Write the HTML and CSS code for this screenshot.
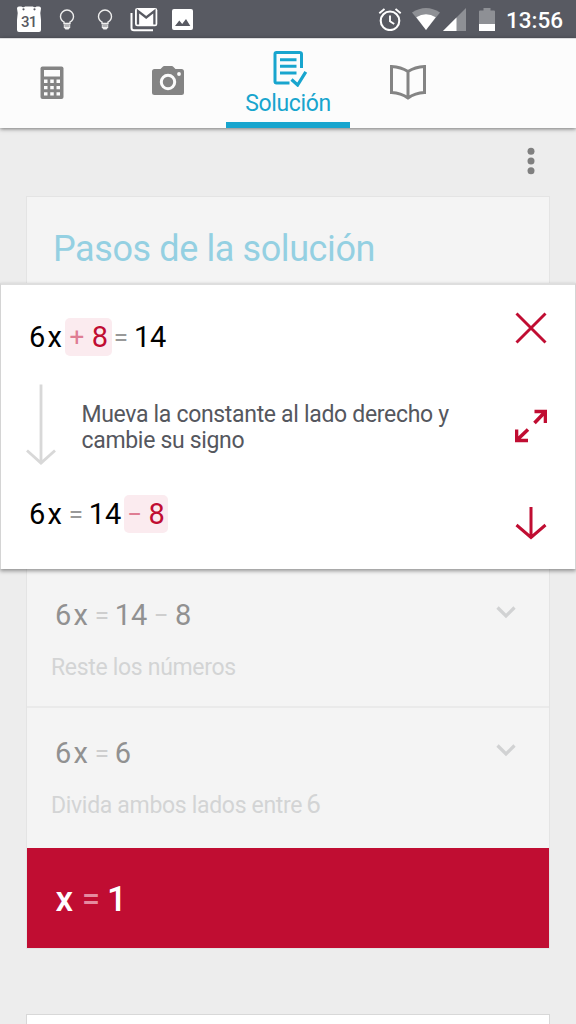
FILE: index.html
```html
<!DOCTYPE html>
<html lang="es">
<head>
    <meta charset="UTF-8">
    <title>Solución</title>
    <meta name="viewport" content="width=device-width, initial-scale=1.0">
    <link rel="stylesheet" href="styles.css">
</head>
<body>

<header class="status-bar">
    <div class="status-left">
        <svg class="calendar" width="26" height="27" viewBox="0 0 26 27">
            <path d="M1 2.500Q1 .5 3 .5H5.500A1.800 1 0 0 0 9 .5H17A1.800 1 0 0 0 20.500 .5H23Q25 .5 25 2.500L24.300 7L25 14V24Q25 26 23 26H3Q1 26 1 24V14L1.700 7Z" fill="#fff"/>
            <circle cx="7.500" cy="3.300" r="1.100" fill="#585a62"/>
            <circle cx="18.500" cy="3.300" r="1.100" fill="#585a62"/>
            <text x="12.700" y="20.800" text-anchor="middle" class="calendar-day">31</text>
        </svg>
        <svg class="bulb" width="16" height="22" viewBox="0 0 16 22">
            <path d="M5 14.500V13Q1.500 11 1.500 7.500A6.300 6.300 0 0 1 14.500 7.500Q14.500 11 11 13V14.500Z" fill="none" stroke="#eee" stroke-width="1.400"/>
            <path d="M4.800 15.500H11.200V18.500L9.500 20.500H6.500L4.800 18.500Z" fill="#eee"/>
            <path d="M5.500 17H10.500" stroke="#585a62" stroke-width=".8"/>
        </svg>
        <svg class="bulb" width="16" height="22" viewBox="0 0 16 22">
            <path d="M5 14.500V13Q1.500 11 1.500 7.500A6.300 6.300 0 0 1 14.500 7.500Q14.500 11 11 13V14.500Z" fill="none" stroke="#eee" stroke-width="1.400"/>
            <path d="M4.800 15.500H11.200V18.500L9.500 20.500H6.500L4.800 18.500Z" fill="#eee"/>
            <path d="M5.500 17H10.500" stroke="#585a62" stroke-width=".8"/>
        </svg>
        <svg class="mail" width="28" height="24" viewBox="0 0 28 24">
            <path d="M1.500 5V20Q1.500 22.300 4 22.300H23" fill="none" stroke="#fff" stroke-width="2"/>
            <path d="M7.500 0H25Q27.300 0 27.300 2.300V16Q27.300 18.300 25 18.300H7.500Q5 18.300 5 16V2.300Q5 0 7.500 0Z" fill="#fff"/>
            <path d="M8 16.500V3.200L16.200 9.500L24.400 3.200V16.500" fill="none" stroke="#585a62" stroke-width="2.300"/>
        </svg>
        <svg class="image" width="21" height="21" viewBox="0 0 21 21">
            <rect width="21" height="21" rx="2" fill="#fff"/>
            <path d="M3 17L7.300 11.500L10.200 15L14 10L18.300 17Z" fill="#585a62"/>
        </svg>
    </div>
    <div class="status-right">
        <svg class="alarm" width="24" height="24" viewBox="0 0 24 24">
            <circle cx="12" cy="13.800" r="9.300" fill="none" stroke="#fff" stroke-width="2.100"/>
            <path d="M12 8.500V14.300L16.200 17M1.300 6.300L6.500 2M22.700 6.300L17.500 2" fill="none" stroke="#fff" stroke-width="1.900"/>
        </svg>
        <svg class="wifi" width="28" height="22" viewBox="0 0 28 22">
            <path d="M0 4.500Q14-4.500 28 4.500L14 22Z" fill="#8e9095"/>
            <path d="M4.300 9.300Q14 3 23.700 9.300L14 22Z" fill="#fff"/>
        </svg>
        <svg class="signal" width="23" height="23" viewBox="0 0 23 23">
            <path d="M0 23L23 0V23Z" fill="#8e9095"/>
            <path d="M0 23L13.500 9.500V23Z" fill="#fff"/>
        </svg>
        <svg class="battery" width="16" height="23" viewBox="0 0 16 23">
            <path d="M0 3.500Q0 2.500 1 2.500H4.500V0H11.500V2.500H15Q16 2.500 16 3.500V16H0Z" fill="#8e9095"/>
            <path d="M0 16H16V23H0Z" fill="#fff"/>
        </svg>
        <span class="clock">13:56</span>
    </div>
</header>

<nav class="tabs">
    <div class="tab">
        <svg width="24" height="34" viewBox="0 0 24 34">
            <rect x=".5" y=".5" width="23" height="32.500" rx="2" fill="#848484"/>
            <path d="M4 4H20V10.500H4Z" fill="#fcfcfc"/>
            <path d="M4 15.300H20M4 21.600H20M4 27.900H20" stroke="#fcfcfc" stroke-width="3.400" stroke-dasharray="3.500 2.750"/>
        </svg>
    </div>
    <div class="tab">
        <svg width="32" height="30" viewBox="0 0 32 30">
            <path d="M2.500 4H8.500L11 1.400Q11.500 1 12 1H20Q20.500 1 21 1.400L23.500 4H29.500Q32 4 32 6.500V27.500Q32 30 29.500 30H2.500Q0 30 0 27.500V6.500Q0 4 2.500 4Z" fill="#848484"/>
            <circle cx="16" cy="17" r="6.700" fill="none" stroke="#fcfcfc" stroke-width="3"/>
            <circle cx="27" cy="9" r="1.900" fill="#fcfcfc"/>
        </svg>
    </div>
    <div class="tab active">
        <svg width="36" height="36" viewBox="0 0 36 36">
            <path d="M17.500 32H4.500Q3 32 3 30.500V3Q3 1.500 4.500 1.500H27.300Q29.500 1.500 29.500 3V17" fill="none" stroke="#18a5ce" stroke-width="3"/>
            <path d="M8 8.700H24.500M8 15.200H24.500M8 22H24.500" stroke="#18a5ce" stroke-width="3"/>
            <path d="M19.500 28.500L25.600 34L33.800 20.800" fill="none" stroke="#18a5ce" stroke-width="3.200"/>
        </svg>
        <span>Solución</span>
    </div>
    <div class="tab">
        <svg width="36" height="36" viewBox="0 0 36 36">
            <path d="M18 6.500Q11 2 1.500 1.500V27.500Q11 28 18 33Q25 28 34.500 27.500V1.500Q25 2 18 6.500ZM18 6.500V33" fill="none" stroke="#848484" stroke-width="3"/>
        </svg>
    </div>
</nav>

<main class="content">
    <div class="menu">
        <svg width="8" height="28" viewBox="0 0 8 28" fill="#808080">
            <circle cx="4" cy="4.300" r="3.500"/>
            <circle cx="4" cy="14" r="3.500"/>
            <circle cx="4" cy="23.700" r="3.500"/>
        </svg>
    </div>

    <section class="card">
        <h1 class="title">Pasos de la solución</h1>

        <article class="step-open">
            <div class="step-body">
                <div class="equation">
                    <span class="num">6</span><span class="var">x</span>
                    <span class="mark plus"><span class="op">+</span><span class="num">8</span></span>
                    <span class="op tight">=</span><span class="num">14</span>
                </div>
                <div class="explain">
                    <svg width="30" height="82" viewBox="0 0 30 82">
                        <path d="M15 .5V79M1 66.500L15 79L29 66.500" fill="none" stroke="#d8d8d8" stroke-width="2.800"/>
                    </svg>
                    <p>Mueva la constante al lado derecho y cambie su signo</p>
                </div>
                <div class="equation">
                    <span class="num">6</span><span class="var">x</span>
                    <span class="op">=</span><span class="num">14</span>
                    <span class="mark minus"><span class="op">−</span><span class="num">8</span></span>
                </div>
            </div>
            <div class="actions">
                <svg width="32" height="32" viewBox="0 0 32 32">
                    <path d="M1.500 1.500L30.500 30.500M30.500 1.500L1.500 30.500" stroke="#c00d32" stroke-width="2.900"/>
                </svg>
                <svg class="expand" width="32" height="34" viewBox="0 0 32 34">
                    <path d="M19.500 2.500H30.500V14M30 3L19.500 14M1.500 20.500V31.500H13M2 31L13 20.500" fill="none" stroke="#c00d32" stroke-width="3.600"/>
                </svg>
                <svg class="next" width="32" height="34" viewBox="0 0 32 34">
                    <path d="M16 0V31M1.500 18L16 30.500L30.500 18" fill="none" stroke="#c00d32" stroke-width="3"/>
                </svg>
            </div>
        </article>

        <article class="step">
            <div class="equation">
                <span class="num">6</span><span class="var">x</span>
                <span class="op">=</span><span class="num">14</span>
                <span class="op minus-op">−</span><span class="num">8</span>
            </div>
            <svg class="chevron" width="20" height="13" viewBox="0 0 20 13">
                <path d="M1.500 1.500L10 10L18.500 1.500" fill="none" stroke="#d1d2d3" stroke-width="3.200"/>
            </svg>
            <p class="hint">Reste los números</p>
        </article>

        <article class="step">
            <div class="equation">
                <span class="num">6</span><span class="var">x</span>
                <span class="op">=</span><span class="num">6</span>
            </div>
            <svg class="chevron" width="20" height="13" viewBox="0 0 20 13">
                <path d="M1.500 1.500L10 10L18.500 1.500" fill="none" stroke="#d1d2d3" stroke-width="3.200"/>
            </svg>
            <p class="hint">Divida ambos lados entre<span class="hint-num">6</span></p>
        </article>

        <div class="result">
            <span>x</span><span class="op">=</span><span>1</span>
        </div>
    </section>

    <section class="card next-card"></section>
</main>

</body>
</html>
```
FILE: styles.css
```css
* {
    box-sizing: border-box;
}

body {
    margin: 0;
    height: 1024px;
    overflow: hidden;
    background: #ededed;
    font-family: Roboto, "Liberation Sans", sans-serif;
    color: #000;
}

svg {
    display: block;
    flex: none;
}

h1, p {
    margin: 0;
    font-weight: 400;
}

/* status bar */
.status-bar {
    height: 38px;
    background: #585a62;
    display: flex;
    justify-content: space-between;
}

.status-left, .status-right {
    display: flex;
    align-items: flex-start;
}

.calendar { margin: 6px 0 0 16px; }
.calendar-day { font-size: 15px; font-weight: 500; letter-spacing: -0.8px; fill: #585a62; }
.bulb { margin: 9px 0 0 17px; }
.bulb + .bulb { margin-left: 22px; }
.mail { margin: 8px 0 0 17px; }
.image { margin: 9px 0 0 14px; }

.status-right { padding-right: 13px; }
.alarm { margin: 7px 0 0; }
.wifi { margin: 8px 0 0 10px; }
.signal { margin: 8px 0 0 3px; }
.battery { margin: 8px 0 0 13px; }

.clock {
    margin-left: 11px;
    color: #fff;
    font-size: 22.5px;
    font-weight: 500;
    line-height: 40px;
}

/* tabs */
.tabs {
    height: 90px;
    background: #fcfcfc;
    display: grid;
    grid-template-columns: 110px 116px 124px 116px 110px;
    box-shadow: 0 1px 4px rgba(0, 0, 0, 0.5);
    border-top: 1px solid #dcdcde;
}

.tab {
    display: flex;
    justify-content: center;
    padding-top: 26px;
}

.tab:first-child { padding-right: 6px; padding-top: 27px; }

.tab.active {
    flex-direction: column;
    justify-content: flex-start;
    align-items: center;
    padding-top: 12px;
    border-bottom: 6px solid #18a5ce;
    color: #18a5ce;
    font-size: 23px;
    letter-spacing: -0.35px;
    line-height: 27px;
}

.tab.active svg { margin-left: 4px; }
.tab.active span { margin-top: 3px; }

/* content */
.content {
    padding: 0 26px;
}

.menu {
    height: 68px;
    display: flex;
    justify-content: flex-end;
    padding: 19px 15px 0 0;
}

.card {
    border: 1px solid #e4e4e4;
    background: #f4f4f4;
}

.title {
    height: 86px;
    padding: 29px 0 0 26px;
    font-size: 36px;
    line-height: 46px;
    letter-spacing: -0.4px;
    color: #94d0e2;
}

.equation {
    display: flex;
    align-items: baseline;
    font-size: 29px;
    line-height: 38px;
    height: 38px;
    letter-spacing: -0.2px;
}

.equation .var {
    margin: 0 3px 0 2.5px;
}

.op {
    width: 16px;
    margin: 0 5px 0 3px;
    text-align: center;
    font-size: 26px;
    color: #999;
    transform: translateY(-1px);
}

/* expanded step, wider than the card */
.step-open {
    position: relative;
    height: 286px;
    margin: 0 -27px;
    padding: 33px 28px 0;
    display: flex;
    justify-content: space-between;
    background: #fff;
    border: 1px solid #d4d4d4;
    border-top: 2px solid #dedede;
    border-bottom: 0;
    box-shadow: 0 2px 4px rgba(0, 0, 0, 0.4);
}

.mark {
    display: flex;
    align-items: baseline;
    height: 38px;
    border-radius: 5px;
    background: #fbebef;
    color: #c00d32;
}

.mark .op {
    color: #df7d93;
    margin-left: 4px;
}

.mark.plus { padding-right: 4px; }
.mark.plus .op { margin-right: 7px; }
.mark.minus { margin-left: 2.5px; padding-right: 3px; }
.mark.minus .op { margin-left: 3px; margin-right: 6px; }
.op.tight { margin-left: 1px; }

.explain {
    display: flex;
    height: 139px;
    padding-top: 28px;
    margin-left: -3px;
}

.explain p {
    width: 400px;
    margin: 18px 0 0 25.5px;
    font-size: 23px;
    line-height: 26px;
    letter-spacing: -0.32px;
    color: #55575e;
}

.actions svg { margin-top: -6px; }
.actions .expand { margin-top: 65px; }
.actions .next { margin-top: 64px; }

/* dimmed steps */
.step {
    height: 137px;
    padding: 27px 33px 0 28px;
    display: grid;
    grid-template-columns: 1fr auto;
    grid-template-rows: 53px auto;
    color: #919191;
}

.step + .step {
    height: 142px;
    border-top: 2px solid #eaeaea;
    padding-top: 26px;
}

.step .op { color: #cecece; }
.step .minus-op { margin: 0 6px 0 6px; }
.chevron { margin-top: 10px; }

.hint {
    margin-left: -4px;
    font-size: 23px;
    line-height: 38px;
    letter-spacing: -0.32px;
    color: #d3d4d5;
}

.hint-num {
    font-size: 26px;
    line-height: 30px;
    margin-left: 4px;
}

.result {
    height: 100px;
    padding: 3px 0 0 28.5px;
    display: flex;
    align-items: center;
    background: #c00d32;
    color: #fff;
    font-size: 35px;
    font-weight: 500;
}

.result .op {
    width: 20px;
    margin: 0 6px 0 8px;
    font-size: 32px;
    color: #e58ba0;
    transform: translateY(-2px);
}

.next-card {
    margin-top: 65px;
    height: 40px;
    border-color: #d8d8d8;
    background: #fff;
}
```
